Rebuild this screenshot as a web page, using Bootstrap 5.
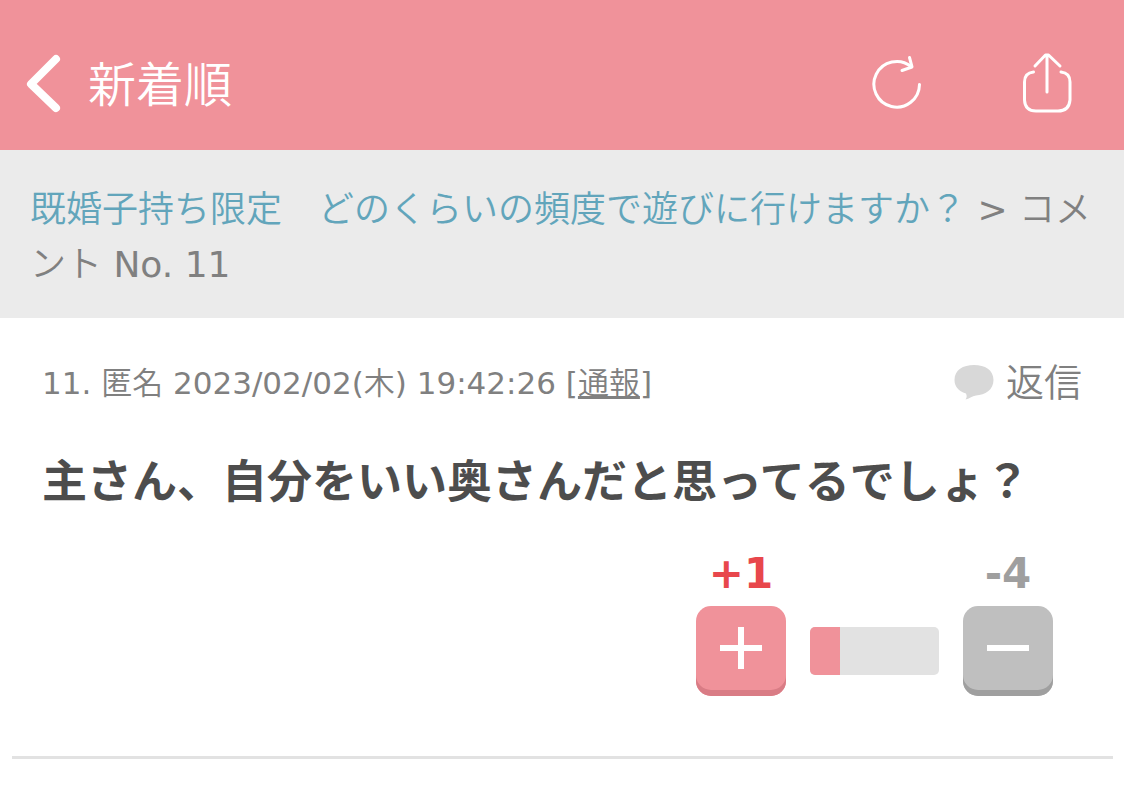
<!DOCTYPE html>
<html lang="ja">
<head>
<meta charset="utf-8">
<meta name="viewport" content="width=device-width, initial-scale=1">
<title>コメント No. 11</title>
<link href="https://cdn.jsdelivr.net/npm/bootstrap@5.3.0/dist/css/bootstrap.min.css" rel="stylesheet">
<style>
  :root { --pink: #f0929a; }
  body { font-family: "DejaVu Sans", "Noto Sans CJK JP DemiLight", "Noto Sans CJK JP", sans-serif; color: #808080; background: #fff; }
  .topbar { background: var(--pink); min-height: 150px; padding: 16px 48px 0 24px; }
  .topbar a, .topbar button { color: #fff; }
  .topbar .back { font-size: 48px; line-height: 64px; gap: 24px; }
  .topbar .back span { padding-top: 4px; }
  .tools { gap: 96px; }
  .crumbs { background: #ebebeb; padding: 32px 30px 26px; font-size: 36px; line-height: 55px; }
  .crumbs a { color: #62a5bb; }
  .comment { padding: 41px 42px 60px; }
  .meta { font-size: 31px; line-height: 48px; }
  .reply { font-size: 38px; line-height: 48px; gap: 12px; }
  .message { font-family: "Noto Sans CJK JP", sans-serif; font-size: 45px; line-height: 64px; font-weight: 700; color: #4d4d4d; margin: 40px 0 0; }
  .votes { gap: 24px; margin: 31px 29px 0 0; }
  .tally { font-size: 42px; line-height: 64px; font-weight: 700; }
  .plus-count { color: #e8474c; }
  .minus-count { color: #9f9f9f; }
  .vote-btn { width: 90px; height: 90px; border-radius: 15px; border: 0; padding: 0 0 6px; background: var(--pink); box-shadow: inset 0 -6px #d97c85; }
  .vote-btn.minus { background: #bfbfbf; box-shadow: inset 0 -6px #9f9f9f; }
  .ratio-bar { width: 129px; height: 48px; border-radius: 5px; margin-bottom: 21px; background: #e2e2e2; }
  .ratio-bar .progress-bar { background: var(--pink); }
  .divider { height: 3px; margin: 0 11px 0 12px; border: 0; background: #e2e2e2; opacity: 1; }
</style>
</head>
<body>
<header class="topbar d-flex align-items-center justify-content-between">
  <a href="#" class="back d-flex align-items-center text-decoration-none">
    <svg width="40" height="60" viewBox="0 0 40 60" fill="none" stroke="currentColor" stroke-width="8" stroke-linecap="round" stroke-linejoin="round" aria-hidden="true"><path d="M32 6L7 31L32 55"/></svg>
    <span>新着順</span>
  </a>
  <div class="tools d-flex align-items-center">
    <button type="button" class="btn border-0 p-0" aria-label="更新">
      <svg class="d-block" width="56" height="64" viewBox="0 0 56 64" fill="none" stroke="currentColor" stroke-width="3" stroke-linecap="round" stroke-linejoin="round"><path d="M51.500 33.500A22.800 22.800 0 1 1 43 15.500"/><path d="M41.500 6.500L44 16L34 19.500"/></svg>
    </button>
    <button type="button" class="btn border-0 p-0" aria-label="共有">
      <svg class="d-block" width="56" height="64" viewBox="0 0 56 64" fill="none" stroke="currentColor" stroke-width="3" stroke-linecap="round" stroke-linejoin="round"><path d="M13.500 21Q4.500 22 4.500 31V49Q5 60 16 60H38Q49 60 50 49V31Q50 22 41 21"/><path d="M27 41V4M15 15L25.500 4H28.500L40 15"/></svg>
    </button>
  </div>
</header>

<nav class="crumbs" aria-label="パンくず">
  <a href="#" class="text-decoration-none">既婚子持ち限定　どのくらいの頻度で遊びに行けますか？</a> &gt; コメント No. 11
</nav>

<main>
  <article class="comment">
    <div class="d-flex justify-content-between align-items-center">
      <div class="meta">11. 匿名 2023/02/02(木) 19:42:26 [<a href="#" class="text-reset">通報</a>]</div>
      <a href="#" class="reply d-flex align-items-center text-reset text-decoration-none">
        <svg width="40" height="36" viewBox="0 0 40 36" fill="#d8d8d8" aria-hidden="true"><path d="M20 0C31 0 39.500 5 39.500 15C39.500 25 31 30 22 30.500C18 31 15 34 11.500 34.500C13 32.500 13 31 12 28.500C4 26 .5 21 .5 15C.5 5 9 0 20 0Z"/></svg>
        <span>返信</span>
      </a>
    </div>
    <h1 class="message">主さん、自分をいい奥さんだと思ってるでしょ？</h1>
    <div class="votes d-flex justify-content-end align-items-end">
      <div class="d-flex flex-column align-items-center">
        <span class="tally plus-count">+1</span>
        <button type="button" class="vote-btn" aria-label="プラス">
          <svg class="d-block mx-auto" width="42" height="42" viewBox="0 0 42 42" fill="#fff"><path d="M18 0h6v18h18v6H24v18h-6V24H0v-6h18Z"/></svg>
        </button>
      </div>
      <div class="progress ratio-bar" role="progressbar" aria-label="プラスの割合" aria-valuenow="1" aria-valuemin="0" aria-valuemax="5">
        <div class="progress-bar" style="width: 23%"></div>
      </div>
      <div class="d-flex flex-column align-items-center">
        <span class="tally minus-count">-4</span>
        <button type="button" class="vote-btn minus" aria-label="マイナス">
          <svg class="d-block mx-auto" width="42" height="42" viewBox="0 0 42 42" fill="#fff"><path d="M0 18h42v6H0Z"/></svg>
        </button>
      </div>
    </div>
  </article>
  <hr class="divider">
</main>
<script src="https://cdn.jsdelivr.net/npm/bootstrap@5.3.0/dist/js/bootstrap.bundle.min.js"></script>
</body>
</html>
